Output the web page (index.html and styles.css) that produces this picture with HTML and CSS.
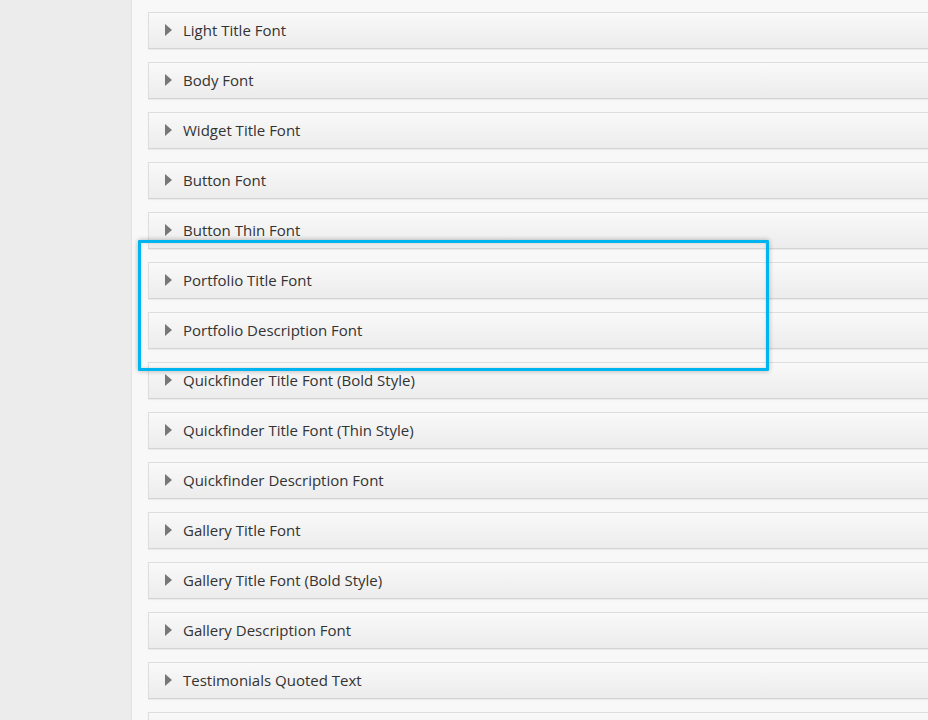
FILE: index.html
```html
<!DOCTYPE html>
<html>
<head>
<meta charset="utf-8">
<link rel="stylesheet" href="styles.css">
</head>
<body>
<div class="page">
  <aside class="sidebar"></aside>
  <main class="content">
    <div class="row"><span class="arrow"></span><span class="label">Light Title Font</span></div>
    <div class="row"><span class="arrow"></span><span class="label">Body Font</span></div>
    <div class="row"><span class="arrow"></span><span class="label">Widget Title Font</span></div>
    <div class="row"><span class="arrow"></span><span class="label">Button Font</span></div>
    <div class="row"><span class="arrow"></span><span class="label">Button Thin Font</span></div>
    <div class="row"><span class="arrow"></span><span class="label">Portfolio Title Font</span></div>
    <div class="row"><span class="arrow"></span><span class="label">Portfolio Description Font</span></div>
    <div class="row"><span class="arrow"></span><span class="label">Quickfinder Title Font (Bold Style)</span></div>
    <div class="row"><span class="arrow"></span><span class="label">Quickfinder Title Font (Thin Style)</span></div>
    <div class="row"><span class="arrow"></span><span class="label">Quickfinder Description Font</span></div>
    <div class="row"><span class="arrow"></span><span class="label">Gallery Title Font</span></div>
    <div class="row"><span class="arrow"></span><span class="label">Gallery Title Font (Bold Style)</span></div>
    <div class="row"><span class="arrow"></span><span class="label">Gallery Description Font</span></div>
    <div class="row"><span class="arrow"></span><span class="label">Testimonials Quoted Text</span></div>
    <div class="row"></div>
    <div class="highlight"></div>
  </main>
</div>
</body>
</html>
```
FILE: styles.css
```css
html, body {
  margin: 0;
  padding: 0;
  height: 100%;
  overflow: hidden;
}
body {
  background: #f8f8f8;
  font-family: "Open Sans", "Liberation Sans", sans-serif;
}
.page {
  display: flex;
  height: 720px;
}
.sidebar {
  width: 131px;
  flex: none;
  background: #ececec;
  border-right: 1px solid #e2e2e2;
}
.content {
  position: relative;
  flex: 1;
  padding: 12px 0 0 16px;
  overflow: hidden;
}
.row {
  display: flex;
  align-items: center;
  height: 35px;
  margin-bottom: 13px;
  border: 1px solid #dedede;
  border-bottom-color: #d4d4d4;
  border-right: none;
  background: linear-gradient(#f9f9f9, #ececec);
  box-shadow: 0 1px 1px rgba(0, 0, 0, 0.05);
}
.arrow {
  width: 0;
  height: 0;
  margin-left: 16px;
  border-top: 6px solid transparent;
  border-bottom: 6px solid transparent;
  border-left: 7px solid #777;
  margin-top: -2px;
}
.label {
  margin-left: 11px;
  font-size: 15px;
  color: #333;
  margin-top: -1px;
}
.highlight {
  position: absolute;
  left: 6px;
  top: 240px;
  width: 625px;
  height: 125px;
  border: 3px solid #00b4f0;
  border-radius: 1px;
  box-shadow: 0 0 5px rgba(0, 0, 0, 0.3), inset 0 0 3px rgba(0, 0, 0, 0.15);
}
```
